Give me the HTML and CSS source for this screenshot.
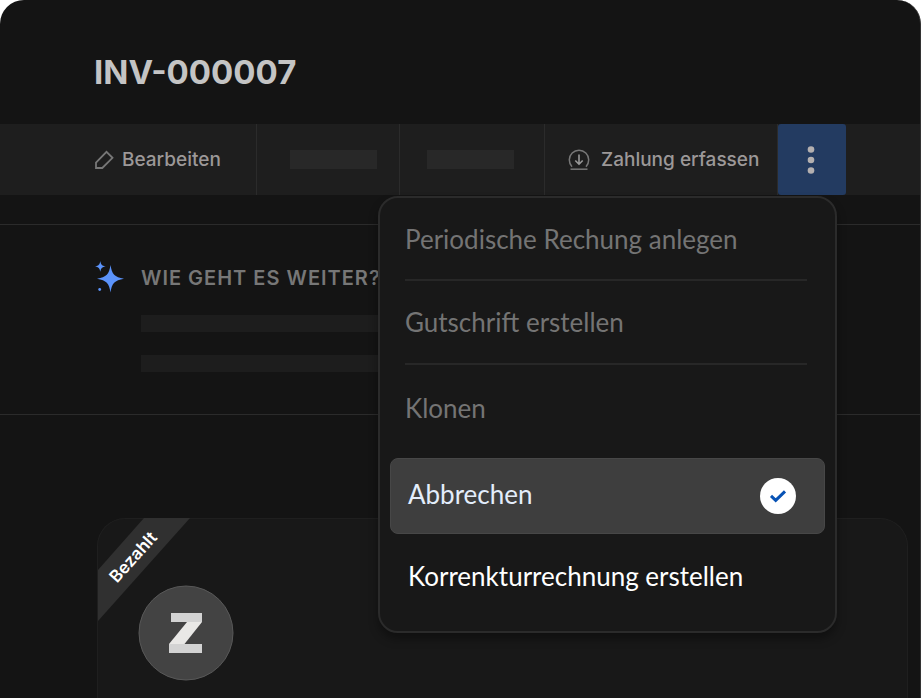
FILE: index.html
```html
<!DOCTYPE html>
<html lang="de">
<head>
<meta charset="utf-8">
<meta name="viewport" content="width=device-width, initial-scale=1">
<title>INV-000007</title>
<link rel="stylesheet" href="styles.css">
</head>
<body>
<main class="window">
  <header class="page-header">
    <h1 class="title">INV-000007</h1>
  </header>

  <div class="toolbar">
    <button class="tool tool-edit" type="button">
      <svg class="icon-pencil" viewBox="0 0 20 20" width="20" height="20" aria-hidden="true"><path d="M2 18v-5.500L12.500 1.800 18.500 7.800 8.300 18z" fill="none" stroke="currentColor" stroke-width="1.800"/></svg>
      <span>Bearbeiten</span>
    </button>
    <div class="tool tool-empty"><span class="bar"></span></div>
    <div class="tool tool-empty tool-empty-wide"><span class="bar"></span></div>
    <button class="tool tool-pay" type="button">
      <svg class="icon-pay" viewBox="0 0 22 22" width="22" height="22" aria-hidden="true"><g fill="none" stroke="currentColor" stroke-width="1.500"><path d="M4 17.700A9.700 9.700 0 1 1 18 17.700"/><path d="M2.500 20.200h17"/></g><path d="M11 5.500v9.500M7.300 11.500l3.700 3.700 3.700-3.700" fill="none" stroke="#999" stroke-width="1.600"/></svg>
      <span>Zahlung erfassen</span>
    </button>
    <div class="more">
      <button class="more-button" type="button" aria-label="Mehr">
        <svg viewBox="0 0 8 28" width="8" height="28" aria-hidden="true"><g fill="#b4b0b0"><circle cx="4" cy="3.500" r="3.300"/><circle cx="4" cy="14" r="3.300"/><circle cx="4" cy="24.500" r="3.300"/></g></svg>
      </button>
      <div class="menu">
        <button class="item" type="button">Periodische Rechung anlegen</button>
        <button class="item" type="button">Gutschrift erstellen</button>
        <button class="item item-plain" type="button">Klonen</button>
        <button class="item item-active" type="button"><span>Abbrechen</span>
          <svg viewBox="0 0 36 36" width="36" height="36" aria-hidden="true"><circle cx="18" cy="18" r="18" fill="#fff"/><path d="M11 17.800l4.700 4.500 9.300-9" fill="none" stroke="#0752b5" stroke-width="3"/></svg>
        </button>
        <button class="item item-last" type="button">Korrenkturrechnung erstellen</button>
      </div>
    </div>
  </div>

  <section class="next">
    <svg class="icon-spark" viewBox="0 0 30 32" width="30" height="32" aria-hidden="true"><g fill="#5b93fb"><path d="M15.500 4C16.800 13 19.500 16.200 29 17.700 19.500 19.200 16.800 22.500 15.500 31.500 14.200 22.500 11.500 19.200 2 17.700 11.500 16.200 14.200 13 15.500 4z"/><path d="M5.300 0C5.900 3.700 7 4.800 10.700 5.400 7 6 5.900 7.100 5.300 10.800 4.700 7.100 3.600 6 0 5.400 3.600 4.800 4.700 3.700 5.300 0z"/><circle cx="4.700" cy="28.500" r="1.400"/></g></svg>
    <div class="next-body">
      <h2 class="next-title">WIE GEHT ES WEITER?</h2>
      <div class="line"></div>
      <div class="line"></div>
    </div>
  </section>

  <section class="invoice">
    <div class="ribbon">
      <svg class="ribbon-shape" viewBox="0 0 92 104" width="92" height="104" aria-hidden="true"><path d="M46 0H92L0 103V52z" fill="#303030"/></svg>
      <span class="ribbon-text">Bezahlt</span>
    </div>
    <svg class="logo" viewBox="0 0 96 96" width="96" height="96" role="img" aria-label="Z"><circle cx="48" cy="48" r="47" fill="#434343" stroke="#585858"/><path d="M49 37h15L46.500 59H31z" fill="#e9e8e6"/><path d="M33 28h31v9H33zM31 59h33v9H31z" fill="#d3d3d3"/></svg>
  </section>
</main>
</body>
</html>
```
FILE: styles.css
```css
* {
  box-sizing: border-box;
}

body {
  margin: 0;
  background: #fff;
  font-family: Inter, "Liberation Sans", sans-serif;
}

button {
  margin: 0;
  padding: 0;
  border: 0;
  background: none;
  color: inherit;
  font: inherit;
  text-align: left;
}

svg {
  display: block;
  flex: none;
}

.window {
  display: flex;
  flex-direction: column;
  min-height: 100vh;
  overflow: hidden;
  border-right: 1px solid #333;
  border-radius: 24px 24px 0 0;
  background: #141414;
}

.page-header {
  padding: 52px 94px 32px;
}

.title {
  margin: 0;
  color: #c4c4c4;
  font-size: 33px;
  font-weight: 700;
  line-height: 40px;
}

.toolbar {
  display: flex;
  height: 71px;
  background: #1e1e1e;
}

.tool {
  display: flex;
  align-items: center;
  border-right: 1px solid #2b2b2b;
  color: #9c9898;
  font-size: 19px;
  font-weight: 500;
  line-height: 24px;
}

.tool-edit {
  gap: 8px;
  width: 257px;
  padding-left: 94px;
}

.tool-empty {
  width: 143px;
  padding-left: 33px;
}

.tool-empty-wide {
  width: 145px;
  padding-left: 27px;
}

.bar {
  width: 87px;
  height: 19px;
  background: #282828;
}

.tool-pay {
  gap: 11px;
  width: 233px;
  padding-left: 23px;
}

.icon-pencil,
.icon-pay {
  color: #777;
}

.more {
  position: relative;
}

.more-button {
  display: flex;
  align-items: center;
  justify-content: center;
  width: 68px;
  height: 100%;
  padding-right: 3px;
  border-radius: 3px;
  background: #233b61;
}

.menu {
  position: absolute;
  z-index: 1;
  top: 72px;
  right: 9px;
  width: 459px;
  padding: 0 10px 13px;
  border: 2px solid #2b2b2b;
  border-radius: 20px;
  background: #181818;
  box-shadow: 0 6px 10px rgba(0, 0, 0, 0.35);
  color: #747474;
  font-family: Lato, "Liberation Sans", sans-serif;
  font-size: 26px;
  line-height: 32px;
}

.item {
  display: flex;
  align-items: center;
  justify-content: space-between;
  width: 402px;
  height: 84px;
  margin: 0 15px;
  border-bottom: 2px solid #272727;
}

.item:first-child {
  height: 83px;
}

.item.item-plain {
  height: 93px;
  padding-bottom: 8px;
  border: 0;
}

.item.item-active {
  width: 100%;
  height: 76px;
  margin: 0;
  padding: 0 28px 0 17px;
  border: 1px solid #474747;
  border-radius: 8px;
  background: #3e3e3e;
  color: #e3edfb;
}

.item-active span {
  padding-bottom: 4px;
}

.item.item-last {
  padding-left: 3px;
  border: 0;
  color: #fff;
}

.next {
  display: flex;
  gap: 16px;
  height: 191px;
  margin-top: 29px;
  padding: 36px 0 0 95px;
  border-top: 1px solid #2b2b2b;
  border-bottom: 1px solid #2b2b2b;
}

.next-body {
  flex: 1;
}

.next-title {
  margin: 5px 0 25px;
  color: #777;
  font-size: 20px;
  font-weight: 600;
  line-height: 24px;
  letter-spacing: 1px;
}

.line {
  width: 400px;
  height: 17px;
  margin-bottom: 23px;
  background: #1d1d1d;
}

.invoice {
  position: relative;
  flex: 1;
  min-height: 180px;
  margin: 103px 12px 0 97px;
  padding: 66px 0 0 40px;
  border: 1px solid #1f1f1f;
  border-bottom: 0;
  border-radius: 28px 28px 0 0;
  background: #181818;
}

.ribbon {
  position: absolute;
  top: -1px;
  left: 0;
}

.ribbon-text {
  position: absolute;
  top: 27px;
  left: 0;
  width: 70px;
  color: #fff;
  font-size: 17px;
  font-weight: 600;
  line-height: 24px;
  text-align: center;
  transform: rotate(-48deg);
}
```
